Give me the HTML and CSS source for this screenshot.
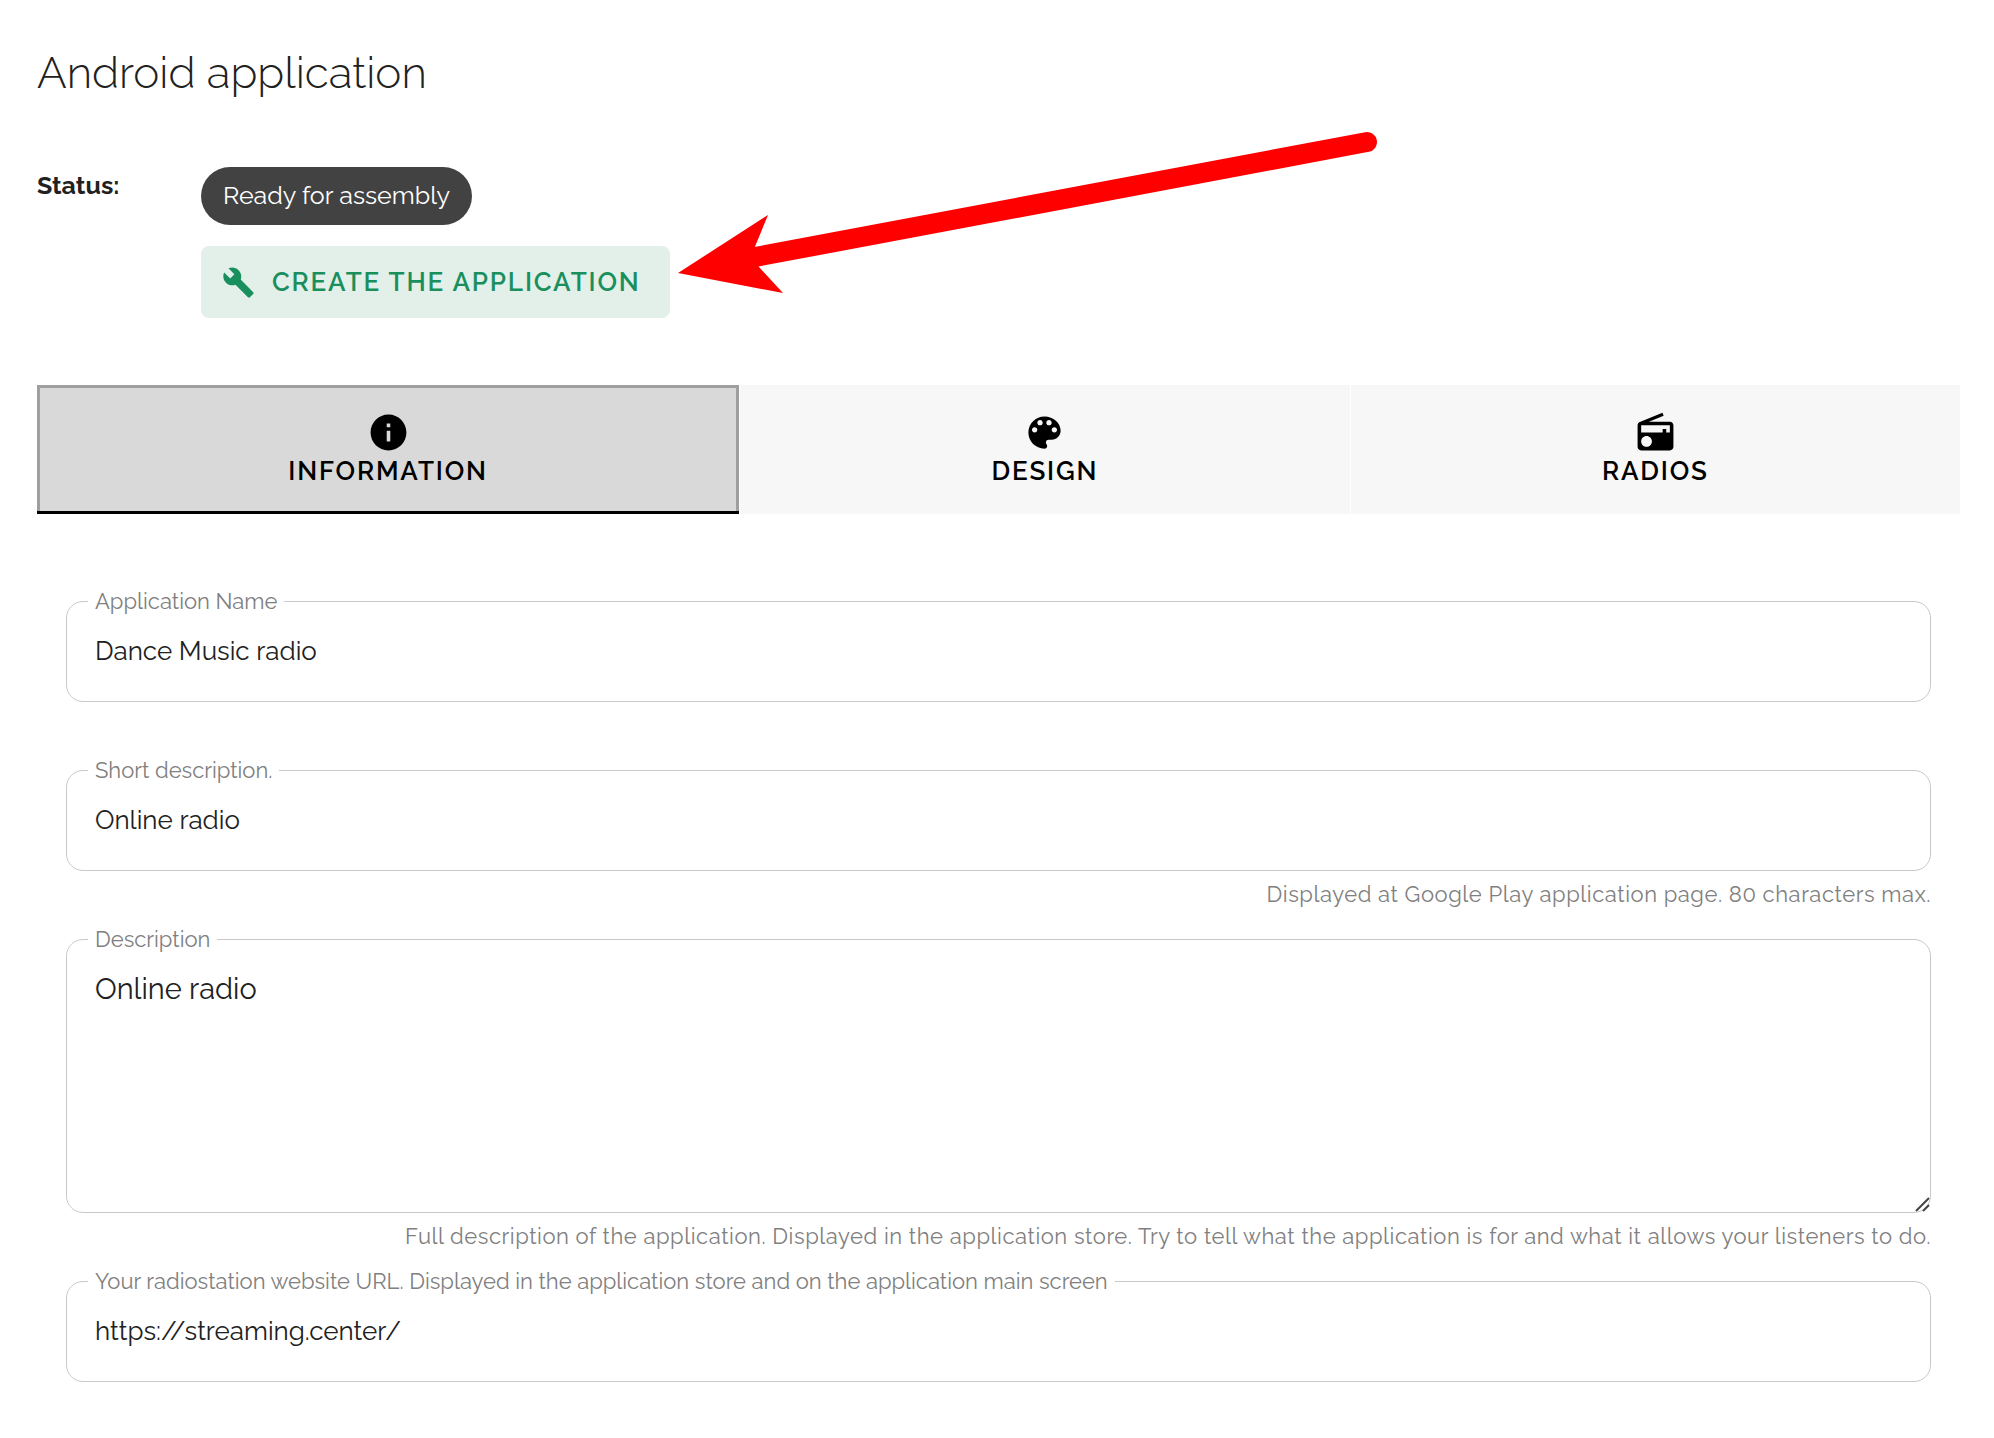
FILE: index.html
```html
<!DOCTYPE html>
<html lang="en">
<head>
  <meta charset="UTF-8" />
  <meta name="viewport" content="width=device-width, initial-scale=1.0" />
  <title>Android application</title>
  <link rel="stylesheet" href="styles.css">
</head>
<body>
  <main class="page">
    <h1 class="title">Android application</h1>

    <div class="status">
      <div class="status-label">Status:</div>
      <div class="status-value">
        <span class="chip">Ready for assembly</span>
        <button type="button" class="create-btn">
          <svg class="create-icon" viewBox="0 0 24 24" aria-hidden="true"><path d="M22.7 19l-9.1-9.1c.9-2.3.4-5-1.5-6.9-2-2-5-2.4-7.4-1.3L9 6 6 9 1.6 4.7C.4 7.1.9 10.1 2.9 12.1c1.9 1.9 4.6 2.4 6.9 1.5l9.1 9.1c.4.4 1 .4 1.4 0l2.3-2.3c.5-.4.5-1.1.1-1.4z"/></svg>
          Create the application
        </button>
      </div>
    </div>

    <div class="tabs" role="tablist">
      <button type="button" class="tab tab-active" role="tab" aria-selected="true">
        <svg class="tab-icon" viewBox="0 0 24 24" aria-hidden="true"><path d="M12 2C6.48 2 2 6.48 2 12s4.48 10 10 10 10-4.48 10-10S17.52 2 12 2zm1 15h-2v-6h2v6zm0-8h-2V7h2v2z"/></svg>
        Information
      </button>
      <button type="button" class="tab" role="tab" aria-selected="false">
        <svg class="tab-icon" viewBox="0 0 24 24" aria-hidden="true"><path d="M12 3c-4.97 0-9 4.03-9 9s4.03 9 9 9c.83 0 1.5-.67 1.5-1.5 0-.39-.15-.74-.39-1.01-.23-.26-.38-.61-.38-.99 0-.83.67-1.5 1.5-1.5H16c2.76 0 5-2.24 5-5 0-4.42-4.03-8-9-8zm-5.5 9c-.83 0-1.5-.67-1.5-1.5S5.67 9 6.5 9 8 9.67 8 10.5 7.33 12 6.5 12zm3-4C8.67 8 8 7.33 8 6.5S8.67 5 9.5 5s1.5.67 1.5 1.5S10.33 8 9.5 8zm5 0c-.83 0-1.5-.67-1.5-1.5S13.67 5 14.5 5s1.5.67 1.5 1.5S15.33 8 14.5 8zm3 4c-.83 0-1.5-.67-1.5-1.5S16.67 9 17.5 9s1.5.67 1.5 1.5-.67 1.5-1.5 1.5z"/></svg>
        Design
      </button>
      <button type="button" class="tab" role="tab" aria-selected="false">
        <svg class="tab-icon" viewBox="0 0 24 24" aria-hidden="true"><path d="M3.24 6.15C2.51 6.43 2 7.17 2 8v12c0 1.1.89 2 2 2h16c1.11 0 2-.9 2-2V8c0-1.11-.89-2-2-2H8.3l8.26-3.34L15.88 1 3.24 6.15zM7 20c-1.66 0-3-1.34-3-3s1.34-3 3-3 3 1.34 3 3-1.34 3-3 3zm13-8h-2v-2h-2v2H4V8h16v4z"/></svg>
        Radios
      </button>
    </div>

    <form class="form">
      <fieldset class="field">
        <legend class="field-legend"><label for="appName">Application Name</label></legend>
        <input class="field-input" type="text" id="appName" value="Dance Music radio" />
      </fieldset>
      <p class="hint"></p>

      <fieldset class="field">
        <legend class="field-legend"><label for="shortDesc">Short description.</label></legend>
        <input class="field-input" type="text" id="shortDesc" value="Online radio" />
      </fieldset>
      <p class="hint">Displayed at Google Play application page. 80 characters max.</p>

      <fieldset class="field">
        <legend class="field-legend"><label for="desc">Description</label></legend>
        <textarea class="field-input field-area" id="desc">Online radio</textarea>
        <svg class="grip" viewBox="0 0 15 15" aria-hidden="true"><path d="M1 14L14 1M8 14L14 8"/></svg>
      </fieldset>
      <p class="hint">Full description of the application. Displayed in the application store. Try to tell what the application is for and what it allows your listeners to do.</p>

      <fieldset class="field">
        <legend class="field-legend"><label for="siteUrl">Your radiostation website URL. Displayed in the application store and on the application main screen</label></legend>
        <input class="field-input" type="text" id="siteUrl" value="https://streaming.center/" />
      </fieldset>
    </form>

    <!-- pointer to the create button -->
    <svg class="arrow" viewBox="0 0 700 163" aria-hidden="true">
      <path class="arrow-line" d="M77 127L689 12"/>
      <path class="arrow-head" d="M0 143L90 85 76 119 81 137 105 163z"/>
    </svg>
  </main>
</body>
</html>
```

FILE: styles.css
```css
* {
  box-sizing: border-box;
}
body {
  margin: 0;
  background-color: #fff;
  color: #212121;
  font-family: Raleway, Lato, sans-serif;
  font-size: 25px;
  line-height: 32px;
}
button,
input,
textarea {
  font: inherit;
  color: inherit;
}
.page {
  position: relative;
  padding: 45px 34px 44px 37px;
}
.title {
  margin: 0 0 66px;
  font-size: 44px;
  line-height: 56px;
  font-weight: 300;
}

/* status */
.status {
  display: flex;
  margin-bottom: 67px;
}
.status-label {
  width: 164px;
  padding-top: 2px;
  font-weight: bold;
}
.status-value {
  display: flex;
  flex-direction: column;
  align-items: flex-start;
  gap: 21px;
}
.chip {
  padding: 12px 22px 14px;
  border-radius: 29px;
  background-color: #424242;
  color: #fff;
}
.create-btn {
  display: flex;
  align-items: center;
  gap: 17px;
  height: 72px;
  padding: 0 29px 0 21px;
  border: none;
  border-radius: 8px;
  background-color: #e2f0e9;
  color: #198f5d;
  font-size: 26px;
  font-weight: 600;
  letter-spacing: 0.07em;
  text-transform: uppercase;
  cursor: pointer;
}
.create-icon {
  width: 33px;
  height: 33px;
  fill: currentColor;
}

/* tabs */
.tabs {
  display: flex;
  gap: 1px;
}
.tab {
  display: flex;
  flex: 1 1 auto;
  flex-direction: column;
  align-items: center;
  height: 129px;
  padding: 26px 0 0;
  border: none;
  background-color: #f7f7f7;
  color: #000;
  font-size: 26px;
  font-weight: 600;
  line-height: 34px;
  letter-spacing: 0.07em;
  text-transform: uppercase;
  cursor: pointer;
}
.tab-active {
  background-color: #d9d9d9;
  box-shadow: inset 0 -3px #000, inset 0 0 0 3px #9f9f9f;
}
.tab-icon {
  width: 43px;
  height: 43px;
  fill: currentColor;
}

/* form */
.form {
  padding: 75px 29px 0;
}
.field {
  position: relative;
  min-width: 0;
  margin: 0;
  padding: 0 21px;
  border: 1px solid #c9c9c9;
  border-radius: 17px;
}
.field-legend {
  padding: 0 7px;
  color: #808080;
  font-size: 22px;
  line-height: 24px;
}
.field-input {
  display: block;
  width: 100%;
  height: 88px;
  padding: 0 7px 13px;
  border: none;
  outline: none;
  background: none;
  font-size: 26px;
}
.field-area {
  height: 261px;
  padding: 18px 7px;
  font-size: 29px;
  line-height: 40px;
  resize: none;
}
.hint {
  height: 56px;
  margin: 0;
  padding-top: 7px;
  color: #808080;
  font-size: 22px;
  letter-spacing: 0.025em;
  text-align: right;
}
.grip {
  position: absolute;
  right: 0;
  bottom: 0;
  width: 15px;
  height: 15px;
  fill: none;
  stroke: #444;
  stroke-width: 2;
}

.arrow {
  position: absolute;
  top: 130px;
  left: 678px;
  width: 700px;
  height: 163px;
  pointer-events: none;
}
.arrow-line {
  fill: none;
  stroke: #f00;
  stroke-width: 20;
  stroke-linecap: round;
}
.arrow-head {
  fill: #f00;
}
```
